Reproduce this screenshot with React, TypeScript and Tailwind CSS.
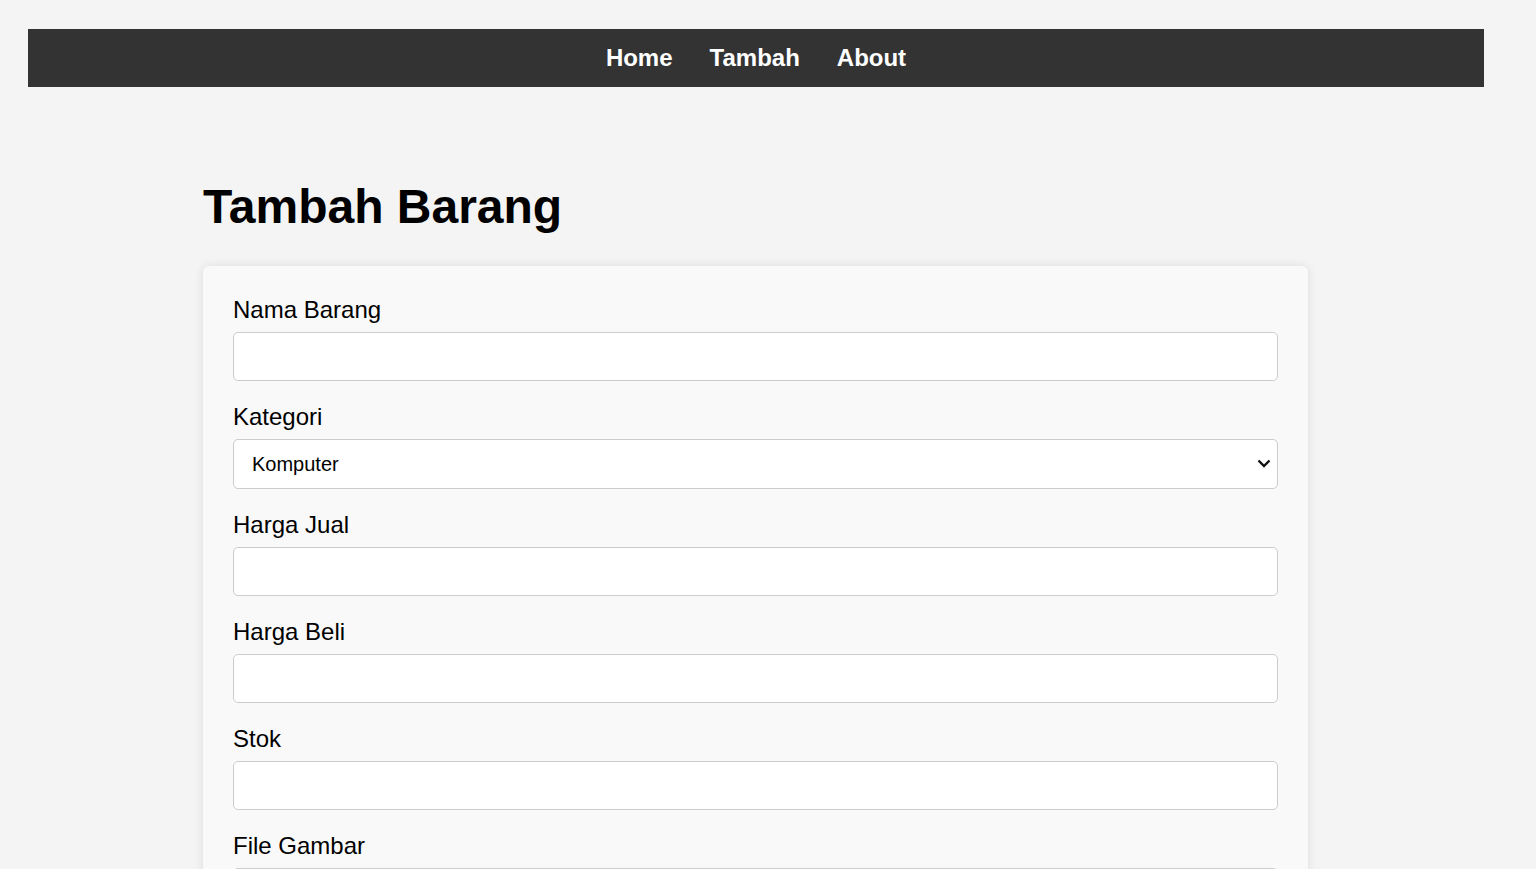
import React, { useState } from 'react';

const fields = [
    { key: 'nama', label: 'Nama Barang', type: 'text' },
    { key: 'kategori', label: 'Kategori', type: 'select' },
    { key: 'jual', label: 'Harga Jual', type: 'number' },
    { key: 'beli', label: 'Harga Beli', type: 'number' },
    { key: 'stok', label: 'Stok', type: 'number' },
];

const App: React.FC = () => {
    const [form, setForm] = useState<Record<string, string>>({ kategori: 'Komputer' });

    const handleChange = (key: string, value: string) => {
        setForm({ ...form, [key]: value });
    };

    return (
        <div className="min-h-screen bg-[#f4f4f4] pl-[28px] pr-[52px] pt-[29px] pb-10 font-['Liberation_Sans',Arial,sans-serif] text-black">
            <nav className="h-[58px] bg-[#333333] flex items-center justify-center gap-[37px]">
                <a href="#" className="text-white text-[24px] font-bold leading-none">Home</a>
                <a href="#" className="text-white text-[24px] font-bold leading-none">Tambah</a>
                <a href="#" className="text-white text-[24px] font-bold leading-none">About</a>
            </nav>

            <div className="w-[1105px] ml-[175px]">
                <h1 className="mt-[93px] mb-[32px] text-[48px] leading-[54px] font-bold">Tambah Barang</h1>

                <form className="bg-[#f9f9f9] rounded-[6px] shadow-[0_0_10px_rgba(0,0,0,0.1)] p-[30px]">
                    {fields.map((f) => (
                        <div key={f.key} className="mb-[22px]">
                            <label className="block text-[24px] leading-[28px] mb-2">{f.label}</label>
                            {f.type === 'select' ? (
                                <div className="relative">
                                    <select
                                        value={form.kategori}
                                        onChange={(e) => handleChange('kategori', e.target.value)}
                                        className="block w-full h-[50px] appearance-none bg-white border border-[#cccccc] rounded-[5px] pl-[18px] pr-10 text-[20px] font-['Liberation_Sans',Arial,sans-serif]"
                                    >
                                        <option value="Komputer">Komputer</option>
                                        <option value="Laptop">Laptop</option>
                                        <option value="Aksesoris">Aksesoris</option>
                                    </select>
                                    <svg className="absolute right-[7px] top-[20px] pointer-events-none" width="14" height="9" viewBox="0 0 14 9" fill="none">
                                        <path d="M1.5 1.5 L7 7 L12.5 1.5" stroke="#111" strokeWidth="2.4" />
                                    </svg>
                                </div>
                            ) : (
                                <input
                                    type={f.type}
                                    value={form[f.key] || ''}
                                    onChange={(e) => handleChange(f.key, e.target.value)}
                                    className="block w-full h-[49px] bg-white border border-[#cccccc] rounded-[5px] px-4 text-[20px]"
                                />
                            )}
                        </div>
                    ))}
                    <div className="mb-[22px]">
                        <label className="block text-[24px] leading-[28px] mb-2">File Gambar</label>
                        <input type="file" className="block w-full h-[49px] bg-white border border-[#cccccc] rounded-[5px] px-4 py-2 text-[18px]" />
                    </div>
                    <button type="submit" className="bg-[#333333] text-white text-[20px] px-6 py-3 rounded-[5px]">Simpan</button>
                </form>
            </div>
        </div>
    );
};

export default App;
